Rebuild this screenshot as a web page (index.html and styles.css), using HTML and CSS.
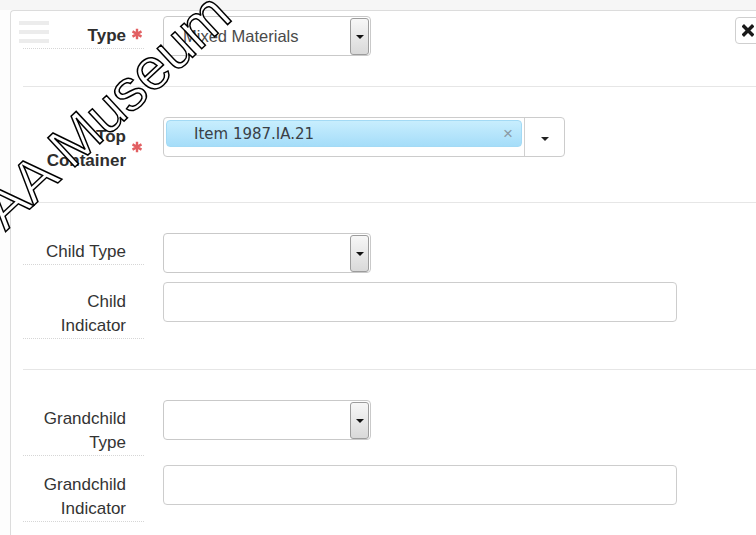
FILE: index.html
```html
<!DOCTYPE html>
<html lang="en">
<head>
<meta charset="utf-8">
<title>Instance</title>
<link rel="stylesheet" href="styles.css">
</head>
<body>
<div class="strip"></div>
<div class="panel">
  <div class="handle"><span></span><span></span><span></span></div>
  <button class="close" type="button" aria-label="Remove">
    <svg width="12" height="13" viewBox="0 0 12 13"><path d="M2 2.5 L10 10.5 M10 2.5 L2 10.5" stroke="#1a1a1a" stroke-width="3.4" stroke-linecap="square" fill="none"/></svg>
  </button>

  <section class="sec first">
    <div class="group">
      <label class="lbl req">Type<svg class="ast" viewBox="0 0 12 12"><path d="M6 0.8V11.2M1.5 3.4L10.5 8.6M10.5 3.4L1.5 8.6" stroke="#e25f62" stroke-width="2.4" fill="none"/></svg></label>
      <div class="select">
        <span class="val">Mixed Materials</span>
        <span class="btn"><i class="tri"></i></span>
      </div>
    </div>
  </section>

  <section class="sec tight">
    <div class="group">
      <label class="lbl req nodots">Top<br>Container<svg class="ast" viewBox="0 0 12 12"><path d="M6 0.8V11.2M1.5 3.4L10.5 8.6M10.5 3.4L1.5 8.6" stroke="#e25f62" stroke-width="2.4" fill="none"/></svg></label>
      <div class="s2">
        <div class="chip"><span class="chip-text">Item 1987.IA.21</span><span class="chip-x">×</span></div>
        <div class="s2-toggle"><i class="caret"></i></div>
      </div>
    </div>
  </section>

  <section class="sec">
    <div class="group">
      <label class="lbl">Child Type</label>
      <div class="select">
        <span class="val"></span>
        <span class="btn"><i class="tri"></i></span>
      </div>
    </div>
    <div class="group">
      <label class="lbl two">Child<br>Indicator</label>
      <div class="input"></div>
    </div>
  </section>

  <section class="sec">
    <div class="group">
      <label class="lbl">Grandchild<br>Type</label>
      <div class="select">
        <span class="val"></span>
        <span class="btn"><i class="tri"></i></span>
      </div>
    </div>
    <div class="group">
      <label class="lbl two">Grandchild<br>Indicator</label>
      <div class="input"></div>
    </div>
  </section>
</div>
<div class="watermark">AA Museum Collection</div>
</body>
</html>
```
FILE: styles.css
```css
html, body {
  margin: 0;
  padding: 0;
  overflow: hidden;
  background: #fdfdfd;
  font-family: "Liberation Sans", Arial, sans-serif;
  color: #333;
}

.strip {
  height: 10px;
  background: #f6f6f6;
}

.panel {
  position: relative;
  margin-left: 10px;
  width: 820px;
  padding-left: 12px;
  background: #fff;
  border-top: 1px solid #dcdcdc;
  border-left: 1px solid #dcdcdc;
  border-top-left-radius: 4px;
  min-height: 560px;
}

/* drag handle */
.handle {
  position: absolute;
  left: 8px;
  top: 10px;
  display: flex;
  flex-direction: column;
  gap: 5px;
}
.handle span {
  display: block;
  width: 30px;
  height: 4px;
  background: #ececec;
}

.close {
  position: absolute;
  left: 724px;
  top: 6px;
  width: 32px;
  height: 27px;
  padding: 0 0 0 6px;
  margin: 0;
  background: #fff;
  border: 1px solid #cfcfcf;
  border-radius: 4px;
  display: flex;
  align-items: center;
}

/* sections */
.sec {
  border-top: 1px solid #e6e6e6;
  padding: 30px 0 21px;
}
.sec.first {
  border-top: 0;
  padding-top: 5px;
}
.sec.tight { padding-bottom: 20px; }

.group {
  display: grid;
  grid-template-columns: 121px 1fr;
  column-gap: 19px;
  align-items: start;
  margin-bottom: 9px;
}

.lbl {
  position: relative;
  display: block;
  padding: 7px 18px 0 0;
  text-align: right;
  font-size: 17px;
  line-height: 24px;
  color: #333;
  border-bottom: 1px dotted #d6d6d6;
}
.lbl.two { padding-top: 8px; }
.lbl.req { font-weight: bold; color: #2e2e2e; }
.lbl.req:first-child { padding-top: 8px; }
.lbl.nodots { border-bottom: 0; padding-top: 7px; }

.ast {
  position: absolute;
  right: 1px;
  top: calc(50% + 2px);
  transform: translateY(-50%);
  width: 12px;
  height: 12px;
}

/* native-looking select */
.select {
  box-sizing: border-box;
  width: 208px;
  height: 40px;
  border: 1px solid #c9c9c9;
  border-radius: 4px;
  background: #fff;
  display: flex;
  align-items: center;
  padding-right: 1px;
}
.val {
  flex: 1;
  padding-left: 19px;
  font-size: 16.5px;
  color: #4a4a4a;
  white-space: nowrap;
}
.btn {
  box-sizing: border-box;
  width: 19px;
  height: 37px;
  border: 1px solid #9c9c9c;
  border-radius: 3px;
  background: linear-gradient(#f7f7f7, #d9d9d9);
  display: flex;
  align-items: center;
  justify-content: center;
}
.tri {
  width: 0;
  height: 0;
  border-left: 4px solid transparent;
  border-right: 4px solid transparent;
  border-top: 4px solid #111;
  margin-top: 1px;
}

/* tag-style chooser */
.s2 {
  box-sizing: border-box;
  width: 402px;
  height: 40px;
  border: 1px solid #cccccc;
  border-radius: 4px;
  background: #fff;
  display: flex;
}
.chip {
  box-sizing: border-box;
  width: 356px;
  height: 27px;
  margin: 2px 0 0 2px;
  padding: 0 8px 0 27px;
  border: 1px solid #a3daf5;
  border-radius: 4px;
  background: linear-gradient(#c8eefe, #a5ddf9);
  display: flex;
  align-items: center;
}
.chip-text {
  flex: 1;
  font-family: "DejaVu Sans", Verdana, sans-serif;
  font-size: 15px;
  color: #3a3f46;
}
.chip-x {
  font-size: 17px;
  color: #8a9aa4;
  line-height: 1;
}
.s2-toggle {
  margin-left: 2px;
  flex: 1;
  border-left: 1px solid #d0d0d0;
  display: flex;
  align-items: center;
  justify-content: center;
}
.caret {
  width: 0;
  height: 0;
  border-left: 4px solid transparent;
  border-right: 4px solid transparent;
  border-top: 4px solid #222;
  margin-top: 3px;
  margin-left: 1px;
}

.input {
  box-sizing: border-box;
  width: 514px;
  height: 40px;
  border: 1px solid #cdcdcd;
  border-radius: 4px;
  background: #fff;
}

/* diagonal watermark stamped over the page */
.watermark {
  position: absolute;
  left: -28px;
  top: 196px;
  transform-origin: 0 0;
  transform: rotate(-43deg);
  font-family: "Liberation Sans", Arial, sans-serif;
  font-size: 58px;
  line-height: 58px;
  color: #fff;
  -webkit-text-stroke: 1.5px #000;
  white-space: nowrap;
  pointer-events: none;
}
```
